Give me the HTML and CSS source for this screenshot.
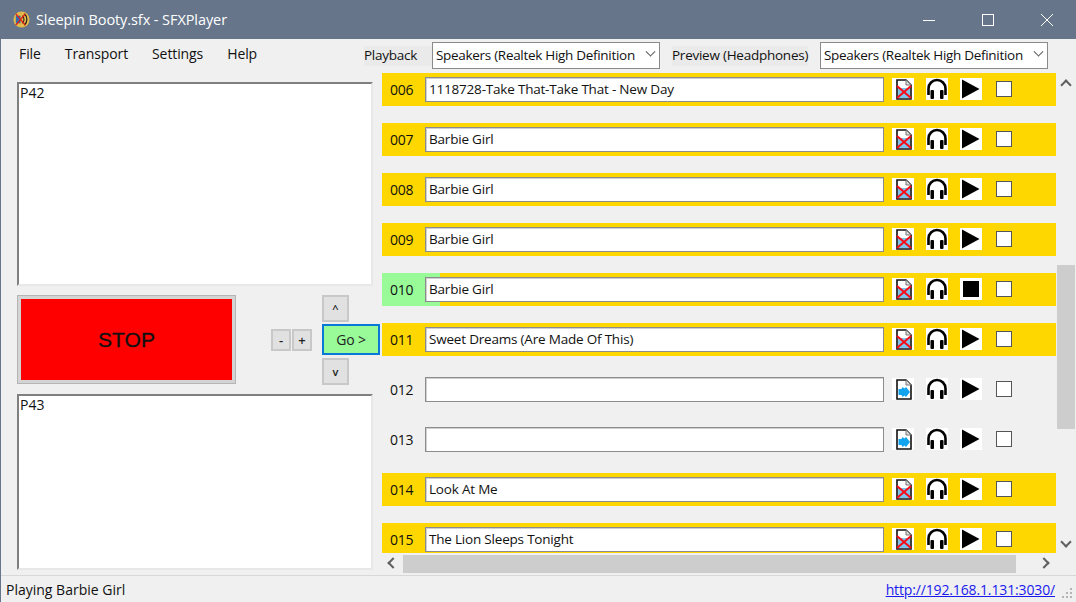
FILE: index.html
```html
<!DOCTYPE html>
<html lang="en">
<head>
    <meta charset="UTF-8">
    <title>Sleepin Booty.sfx - SFXPlayer</title>
    <link rel="stylesheet" href="styles.css">
</head>
<body>
    <svg class="defs" width="0" height="0">
        <symbol id="ico-missing" viewBox="0 0 22 22">
            <path d="M5 2h9l5 5v14H5z" fill="#fff" stroke="#111" stroke-width="1.600"/>
            <path d="M14 2v5h5" fill="#ddd" stroke="#777"/>
            <path d="M6 10h12v10H6z" fill="#7cc4ec"/>
            <path d="M5 8l14 12M19 8L5 20" stroke="#fa0a14" stroke-width="2"/>
        </symbol>
        <symbol id="ico-file" viewBox="0 0 22 22">
            <path d="M5 2h9l5 5v14H5z" fill="#fff" stroke="#111" stroke-width="1.600"/>
            <path d="M14 2v5h5" fill="#ddd" stroke="#777"/>
            <path d="M6.500 11h3l1-2 2 1.500 1.500-1.500 4 5-4 5-1.500-1.500-2 1.500-1-2h-3z" fill="#12a4ee"/>
        </symbol>
        <symbol id="ico-phones" viewBox="0 0 22 22">
            <path d="M2.500 17v-6.500a8.500 8.500 0 0 1 17 0V17" fill="none" stroke="#000" stroke-width="2.600"/>
            <rect x="4.500" y="12" width="3.500" height="9" rx="1" fill="#000"/>
            <rect x="14" y="12" width="3.500" height="9" rx="1" fill="#000"/>
        </symbol>
        <symbol id="ico-play" viewBox="0 0 22 22">
            <path d="M2 1.500L19.500 11 2 20.500z" fill="#000"/>
        </symbol>
        <symbol id="ico-stop" viewBox="0 0 22 22">
            <rect x="3" y="3" width="16" height="16" fill="#000"/>
        </symbol>
    </svg>

    <div class="window">
        <header class="titlebar">
            <svg class="app-icon" width="17" height="17" viewBox="0 0 18 18">
                <circle cx="9" cy="9" r="8.500" fill="#e3b94a"/>
                <path d="M3 5h5v8H3z" fill="#2f6fb0"/>
                <path d="M10 5a6 6 0 0 1 0 8M12 3a8 8 0 0 1 0 12" fill="none" stroke="#222" stroke-width="1.300"/>
                <path d="M3 3l10 12M13 3L3 15" stroke="#e0201a" stroke-width="1.500"/>
            </svg>
            <span class="title">Sleepin Booty.sfx - SFXPlayer</span>
            <div class="caption-btns">
                <svg width="12" height="12" viewBox="0 0 12 12"><path d="M0 6.500h12" stroke="#fff"/></svg>
                <svg width="12" height="12" viewBox="0 0 12 12"><rect x="0.500" y="0.500" width="11" height="11" fill="none" stroke="#fff"/></svg>
                <svg width="12" height="12" viewBox="0 0 12 12"><path d="M0 0l12 12M12 0L0 12" stroke="#fff"/></svg>
            </div>
        </header>

        <div class="toolbar">
            <nav class="menu">
                <span>File</span>
                <span>Transport</span>
                <span>Settings</span>
                <span>Help</span>
            </nav>
            <label class="dev-label dev-label-play">Playback</label>
            <div class="combo">Speakers (Realtek High Definition<span class="chev"></span></div>
            <label class="dev-label dev-label-prev">Preview (Headphones)</label>
            <div class="combo">Speakers (Realtek High Definition<span class="chev"></span></div>
        </div>

        <main class="main">
            <section class="left">
                <div class="cue-box cue-top">P42</div>
                <div class="controls">
                    <div class="stop-frame"><button class="stop-btn">STOP</button></div>
                    <div class="nudge">
                        <button class="small-btn">-</button>
                        <button class="small-btn">+</button>
                    </div>
                    <div class="go-col">
                        <button class="step-btn">^</button>
                        <button class="go-btn">Go &gt;</button>
                        <button class="step-btn">v</button>
                    </div>
                </div>
                <div class="cue-box cue-bottom">P43</div>
            </section>

            <section class="list-wrap">
                <div class="list-top">
                    <div class="rows" id="rows"></div>
                    <div class="vscroll">
                        <span class="arrow arrow-up"></span>
                        <div class="vtrack"><div class="vthumb"></div></div>
                        <span class="arrow arrow-down"></span>
                    </div>
                </div>
                <div class="hscroll">
                    <span class="arrow arrow-left"></span>
                    <div class="hthumb"></div>
                    <span class="arrow arrow-right"></span>
                </div>
            </section>
        </main>

        <footer class="statusbar">
            <span>Playing Barbie Girl</span>
            <a class="status-link" href="#">http://192.168.1.131:3030/</a>
            <svg class="grip" width="12" height="12" viewBox="0 0 12 12">
                <path d="M9 1h2v2H9zM5 5h2v2H5zM9 5h2v2H9zM1 9h2v2H1zM5 9h2v2H5zM9 9h2v2H9z" fill="#b4b4b4"/>
            </svg>
        </footer>
    </div>

    <script>
        const tracks = [
            ['006', '1118728-Take That-Take That - New Day', 'ico-missing', 'ico-play', 'gold'],
            ['007', 'Barbie Girl', 'ico-missing', 'ico-play', 'gold'],
            ['008', 'Barbie Girl', 'ico-missing', 'ico-play', 'gold'],
            ['009', 'Barbie Girl', 'ico-missing', 'ico-play', 'gold'],
            ['010', 'Barbie Girl', 'ico-missing', 'ico-stop', 'gold playing'],
            ['011', 'Sweet Dreams (Are Made Of This)', 'ico-missing', 'ico-play', 'gold'],
            ['012', '', 'ico-file', 'ico-play', ''],
            ['013', '', 'ico-file', 'ico-play', ''],
            ['014', 'Look At Me', 'ico-missing', 'ico-play', 'gold'],
            ['015', 'The Lion Sleeps Tonight', 'ico-missing', 'ico-play', 'gold']
        ];

        function tile(id) {
            return `<span class="tile"><svg width="22" height="22"><use href="#${id}"/></svg></span>`;
        }

        document.getElementById('rows').innerHTML = tracks.map(t => `
            <div class="row ${t[4]}">
                <span class="num">${t[0]}</span>
                <div class="name">${t[1]}</div>
                ${tile(t[2])}${tile('ico-phones')}${tile(t[3])}
                <span class="check"></span>
            </div>`).join('');
    </script>
</body>
</html>
```

FILE: styles.css
```css
* {
    box-sizing: border-box;
}
html, body {
    margin: 0;
    padding: 0;
    height: 100%;
    overflow: hidden;
}
body {
    font-family: "Open Sans", "Liberation Sans", sans-serif;
    font-size: 14px;
    color: #111;
    background: #f0f0f0;
}
.defs {
    position: absolute;
}
.window {
    width: 1076px;
    height: 602px;
    display: flex;
    flex-direction: column;
    border-left: 1px solid #66758a;
    background: #f0f0f0;
}
.titlebar {
    height: 39px;
    flex: none;
    display: flex;
    align-items: center;
    padding-left: 12px;
    background: #66758a;
    color: #fff;
}
.title {
    margin-left: 6px;
    font-size: 14.500px;
    letter-spacing: -0.080px;
}
.caption-btns {
    margin-left: auto;
    display: flex;
    gap: 47px;
    padding-right: 23px;
}
.toolbar {
    height: 33px;
    flex: none;
    display: flex;
    align-items: center;
}
.menu {
    display: flex;
    gap: 24px;
    width: 363px;
    padding: 0 0 4px 18px;
    letter-spacing: -0.100px;
}
.dev-label {
    font-size: 13.500px;
    letter-spacing: -0.250px;
    padding-bottom: 2px;
    background: #eaeaea;
    white-space: nowrap;
}
.dev-label-play {
    width: 68px;
}
.dev-label-prev {
    margin: 0 12px;
    width: 136px;
}
.combo {
    width: 228px;
    height: 27px;
    padding: 0 0 2px 3px;
    border: 1px solid #8a8a8a;
    background: #fff;
    display: flex;
    align-items: center;
    font-size: 13.500px;
    letter-spacing: -0.300px;
    white-space: nowrap;
    overflow: hidden;
}
.chev {
    margin-left: auto;
    margin-right: 5px;
    width: 7px;
    height: 7px;
    flex: none;
    border-right: 1px solid #555;
    border-bottom: 1px solid #555;
    transform: rotate(45deg) translate(-2px, -2px);
}
.main {
    flex: 1;
    min-height: 0;
    display: flex;
}
.left {
    width: 381px;
    flex: none;
    padding: 10px 0 0 16px;
}
.cue-box {
    width: 356px;
    padding-left: 1px;
    line-height: 17px;
    background: #fff;
    border: 2px solid #e8e8e8;
    border-top-color: #808080;
    border-left-color: #808080;
}
.cue-top {
    height: 204px;
}
.cue-bottom {
    height: 176px;
}
.controls {
    height: 108px;
    display: flex;
    align-items: flex-start;
    padding-top: 9px;
}
.stop-frame {
    width: 219px;
    height: 89px;
    padding: 3px;
    border: 1px solid #b5b5b5;
    background: #d4d4d4;
}
.stop-btn {
    width: 100%;
    height: 100%;
    border: none;
    background: #f00;
    color: #111;
    font-family: "Liberation Sans", sans-serif;
    font-size: 21px;
    -webkit-text-stroke: 0.3px #111;
}
button {
    font-family: "Open Sans", "Liberation Sans", sans-serif;
    padding: 0;
    color: #222;
}
.nudge {
    display: flex;
    gap: 1px;
    margin: 34px 0 0 35px;
}
.small-btn {
    width: 20px;
    height: 22px;
    border: 2px solid #c8c8c8;
    background: #e1e1e1;
    font-size: 13px;
    font-weight: 600;
}
.go-col {
    display: flex;
    flex-direction: column;
    align-items: flex-start;
    gap: 2px;
    margin-left: 10px;
}
.step-btn {
    width: 27px;
    height: 27px;
    border: 2px solid #c8c8c8;
    background: #e1e1e1;
    font-size: 11px;
    font-weight: 600;
}
.go-btn {
    width: 58px;
    height: 31px;
    margin-bottom: 1px;
    border: 2px solid #0a78d7;
    background: #98fb98;
    font-size: 14px;
    letter-spacing: -0.200px;
}
.list-wrap {
    flex: 1;
    min-width: 0;
    display: flex;
    flex-direction: column;
}
.list-top {
    height: 481px;
    display: flex;
}
.rows {
    width: 674px;
    flex: none;
    padding-top: 1px;
    overflow: hidden;
}
.row {
    width: 674px;
    height: 33px;
    margin-bottom: 17px;
    display: flex;
    align-items: center;
    font-size: 14px;
    letter-spacing: -0.200px;
}
.gold {
    background: #ffd700;
}
.playing {
    background: linear-gradient(90deg, #98fb98 58px, #ffd700 58px);
}
.num {
    width: 43px;
    padding-left: 8px;
    font-size: 14px;
}
.name {
    width: 459px;
    height: 25px;
    padding: 2px 0 0 3px;
    border: 1px solid #8c8c8c;
    box-shadow: inset 1px 1px 0 #d0d0d0;
    background: #fff;
    font-size: 13.500px;
    white-space: nowrap;
    overflow: hidden;
}
.tile {
    width: 22px;
    height: 22px;
    margin: 0 12px 1px 0;
    background: #fff;
    display: block;
}
.name + .tile {
    margin-left: 8px;
}
.tile svg {
    display: block;
}
.check {
    width: 16px;
    height: 16px;
    margin: 0 0 2px 2px;
    border: 1px solid #555;
    background: #fff;
}
.vscroll {
    width: 19px;
    flex: none;
    display: flex;
    flex-direction: column;
    align-items: center;
    background: #f0f0f0;
}
.vtrack {
    flex: 1;
    width: 100%;
    padding: 173px 0 0 1px;
}
.vthumb {
    height: 164px;
    background: #cdcdcd;
}
.arrow {
    flex: none;
    width: 8px;
    height: 8px;
    border: solid #606060;
    border-width: 2px 0 0 2px;
}
.arrow-up {
    margin: 9px 0 3px;
    transform: rotate(45deg);
}
.arrow-down {
    margin: 0 0 7px;
    transform: rotate(225deg);
}
.arrow-left {
    margin: 0 6px 2px 7px;
    transform: rotate(-45deg);
}
.arrow-right {
    margin: 0 0 2px 24px;
    transform: rotate(135deg);
}
.hscroll {
    height: 20px;
    flex: none;
    display: flex;
    align-items: center;
    padding-top: 2px;
}
.hthumb {
    width: 613px;
    height: 18px;
    background: #cdcdcd;
}
.statusbar {
    height: 27px;
    flex: none;
    display: flex;
    align-items: center;
    padding-left: 5px;
    border-top: 1px solid #d8d8d8;
    background: #f0f0f0;
    font-size: 14px;
}
.status-link {
    margin-left: auto;
    color: #1a1aee;
    letter-spacing: -0.140px;
}
.grip {
    flex: none;
    margin: 8px 3px 0 6px;
}
```
